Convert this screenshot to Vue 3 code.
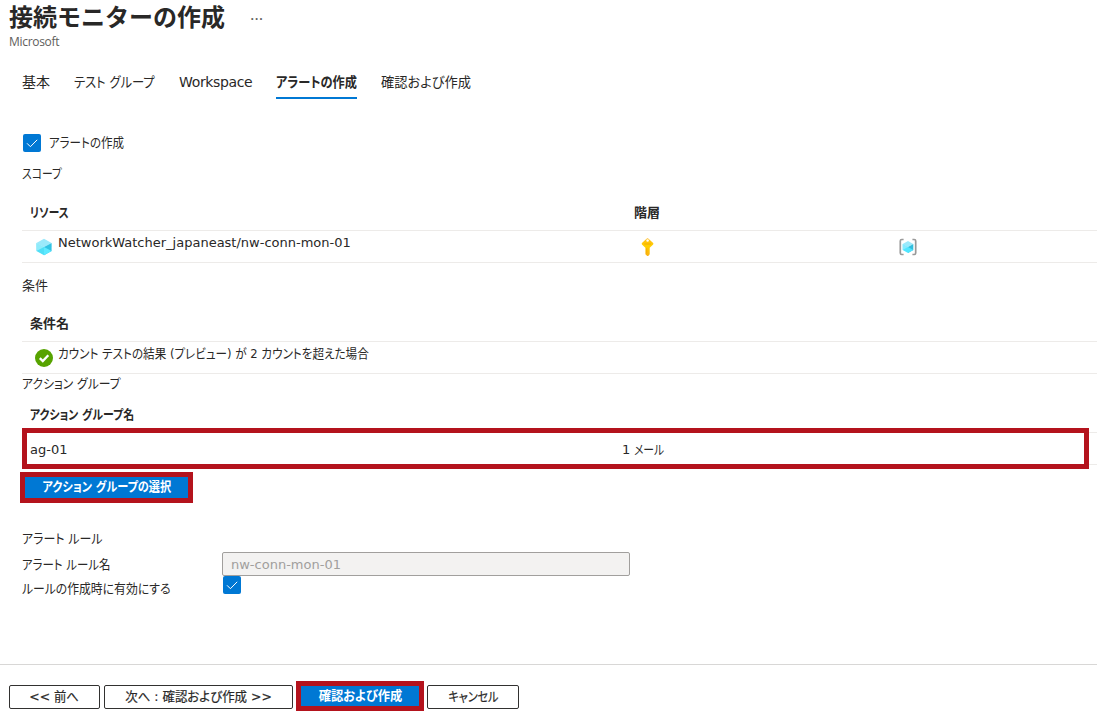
<template>
  <div class="page">
    <header class="header">
      <h1 class="title">接続モニターの作成</h1>
      <button class="more" aria-label="その他">…</button>
    </header>
    <p class="publisher">Microsoft</p>

    <nav class="tabs">
      <button
        v-for="tab in tabs"
        :key="tab.id"
        class="tab"
        :class="[tab.id, { active: tab.id === activeTab }]"
        @click="activeTab = tab.id"
      >
        <span class="text">{{ tab.label }}</span>
      </button>
    </nav>

    <main class="content">
      <label class="create-alert">
        <span class="check" @click="createAlert = !createAlert">
          <svg v-if="createAlert" viewBox="0 0 18 18"><path d="M4 9.3l3.4 3.4L14.2 5.8" /></svg>
        </span>
        <span class="text create-label">アラートの作成</span>
      </label>
      <p class="section scope"><span class="text">スコープ</span></p>

      <div class="table">
        <div class="row head">
          <span class="cell name h-resource"><span class="text">リソース</span></span>
          <span class="cell h-level">階層</span>
        </div>
        <div class="row">
          <div class="cell name with-icon">
            <svg class="cube" viewBox="0 0 18 18">
              <path fill="#9be9fb" d="M9 .7l7.6 4.2L9 9 1.4 4.9z" />
              <path fill="#50dff6" d="M1.4 4.9L9 9v8.3l-7.6-4.2z" />
              <path fill="#32c3e4" d="M16.6 4.9L9 9v8.3l7.6-4.2z" />
              <path fill="#b9f3ff" d="M1.4 4.9L9 9l-7.6 4.1z" opacity=".6" />
              <path fill="#5ee9ff" d="M9 9l7.6 4.1L9 17.3z" />
            </svg>
            <span class="resource">NetworkWatcher_japaneast/nw-conn-mon-01</span>
          </div>
          <div class="cell level">
            <svg class="key" viewBox="0 0 18 18">
              <defs>
                <linearGradient id="gold" x1="0" y1="0" x2="0" y2="1">
                  <stop offset="0" stop-color="#ffb816" />
                  <stop offset=".45" stop-color="#ffd000" />
                  <stop offset="1" stop-color="#fbb114" />
                </linearGradient>
              </defs>
              <path
                fill="url(#gold)"
                fill-rule="evenodd"
                d="M7.6.7a1.4 1.4 0 0 1 1.9 0l4.4 4.1a1.3 1.3 0 0 1 0 1.9l-3.2 3v6.5L9.2 18h-1L6.4 16.2V9.7l-3.2-3a1.3 1.3 0 0 1 0-1.9zM8.6 1.2a1.3 1.3 0 1 0 0 2.6 1.3 1.3 0 0 0 0-2.6z"
              />
              <path fill="#f09a00" d="M5.3 5.6h6.6v.9H5.3zM7.3 10.2h.9v5.2h-.9z" opacity=".6" />
            </svg>
          </div>
          <div class="cell group">
            <svg class="brackets" viewBox="0 0 18 18">
              <path fill="none" stroke="#999" stroke-width="1.7" d="M4.6 1.5H2.8Q1.3 1.5 1.3 3v12q0 1.5 1.5 1.5h1.8M13.4 1.5h1.8q1.5 0 1.5 1.5v12q0 1.5-1.5 1.5h-1.8" />
              <path fill="#9be9fb" d="M9 3l5.3 3L9 9 3.7 6z" />
              <path fill="#50e6ff" d="M3.7 6L9 9v6.1l-5.3-3z" />
              <path fill="#32bedd" d="M14.3 6L9 9v6.1l5.3-3z" />
              <path fill="#9cebff" d="M3.7 6L9 9l-5.3 3.1z" opacity=".7" />
              <path fill="#50e6ff" d="M9 9l5.3 3.1-5.3 3z" />
            </svg>
          </div>
        </div>
      </div>

      <p class="section condition">条件</p>
      <div class="table">
        <div class="row head">
          <span class="cell name">条件名</span>
        </div>
        <div class="row">
          <div class="cell with-icon">
            <svg class="ok" viewBox="0 0 18 18">
              <circle cx="9" cy="9" r="9" fill="#57a300" />
              <path d="M4.8 9.1l3 3 5.5-5.8" fill="none" stroke="#fff" stroke-width="2.3" />
            </svg>
            <span class="text condition-text">カウント テストの結果 (プレビュー) が 2 カウントを超えた場合</span>
          </div>
        </div>
      </div>

      <p class="section action"><span class="text">アクション グループ</span></p>
      <div class="table action-table">
        <div class="row head">
          <span class="cell name h-action"><span class="text">アクション グループ名</span></span>
        </div>
        <div class="row selected">
          <span class="cell name">ag-01</span>
          <span class="cell">1 <span class="text mail">メール</span></span>
          <span class="outline"></span>
        </div>
      </div>
      <button class="primary marked select-group"><span class="text">アクション グループの選択</span></button>

      <section class="rule">
        <p class="rule-line r-title"><span class="text">アラート ルール</span></p>
        <div class="rule-line">
          <label class="rule-label r-name"><span class="text">アラート ルール名</span></label>
          <input class="rule-input" :value="ruleName" disabled />
        </div>
        <div class="rule-line enable">
          <label class="rule-label r-enable"><span class="text">ルールの作成時に有効にする</span></label>
          <span class="check" @click="enableRule = !enableRule">
            <svg v-if="enableRule" viewBox="0 0 18 18"><path d="M4 9.3l3.4 3.4L14.2 5.8" /></svg>
          </span>
        </div>
      </section>
    </main>

    <footer class="footer">
      <button class="btn prev"><span class="text">&lt;&lt; 前へ</span></button>
      <button class="btn next"><span class="text">次へ : 確認および作成 &gt;&gt;</span></button>
      <button class="primary marked review"><span class="text">確認および作成</span></button>
      <button class="btn cancel"><span class="text">キャンセル</span></button>
    </footer>
  </div>
</template>

<script setup>
import { ref } from 'vue'

const tabs = [
  { id: 'basic', label: '基本' },
  { id: 'test-group', label: 'テスト グループ' },
  { id: 'workspace', label: 'Workspace' },
  { id: 'alert', label: 'アラートの作成' },
  { id: 'confirm', label: '確認および作成' },
]

const activeTab = ref('alert')
const createAlert = ref(true)
const enableRule = ref(true)
const ruleName = ref('nw-conn-mon-01')
</script>

<style>
body {
  background: #fff;
  overflow: hidden;
}
</style>

<style scoped>
.page {
  height: 722px;
  display: flex;
  flex-direction: column;
  box-sizing: border-box;
  color: #292827;
  font: 13px/18px 'DejaVu Sans', 'Noto Sans CJK JP', sans-serif;
  font-feature-settings: 'palt';
  white-space: nowrap;
  overflow: hidden;
}

p,
h1 {
  margin: 0;
}

button {
  font: inherit;
  font-feature-settings: inherit;
  color: inherit;
  padding: 0;
  border: 0;
  background: none;
  cursor: pointer;
}

.text {
  display: inline-block;
  transform-origin: 0 50%;
}

button .text {
  transform-origin: 50% 50%;
}

.tab .text {
  transform-origin: 0 50%;
}

.test-group .text { transform: scaleX(0.875); }
.alert .text { transform: scaleX(0.87); }
.confirm .text { transform: scaleX(0.945); }
.create-label { transform: scaleX(0.885); }
.scope .text { transform: scaleX(0.83); }
.h-resource .text { transform: scaleX(0.82); }
.condition-text { transform: scaleX(0.891); }
.action .text { transform: scaleX(0.91); }
.h-action .text { transform: scaleX(0.84); }
.mail { transform: scaleX(0.83); }
.select-group .text { transform: scaleX(0.86); }
.r-title .text { transform: scaleX(0.92); }
.r-name .text { transform: scaleX(0.88); }
.r-enable .text { transform: scaleX(0.91); }
.prev .text { transform: scaleX(0.95); }
.next .text { transform: scaleX(0.957); }
.review .text { transform: scaleX(0.94); }
.cancel .text { transform: scaleX(0.85); }

.header {
  display: flex;
  height: 34px;
  padding-left: 9px;
}

.title {
  width: 241px;
  font-size: 24px;
  font-weight: 700;
  line-height: 36px;
  font-feature-settings: normal;
}

.more {
  height: 34px;
  padding-bottom: 6px;
  box-sizing: border-box;
  font: 17px/22px 'Open Sans', sans-serif;
  color: #605e5c;
}

.publisher {
  padding-left: 9px;
  font: 12px/16px 'Open Sans', sans-serif;
  letter-spacing: -0.3px;
  color: #605e5c;
}

.tabs {
  display: flex;
  gap: 24px;
  height: 50px;
  padding: 17px 0 0 22px;
  box-sizing: border-box;
  font-size: 14px;
}

.tab {
  height: 32px;
  line-height: 30px;
  text-align: left;
  box-sizing: border-box;
  border-bottom: 2px solid transparent;
}

.tab.basic { width: 28px; }
.tab.test-group { width: 81px; }
.tab.workspace { width: 73px; letter-spacing: -0.35px; }
.tab.alert { width: 81px; }

.tab.active {
  font-weight: 700;
  border-bottom-color: #0078d4;
}

.content {
  flex: 1;
  display: flex;
  flex-direction: column;
  padding: 33px 0 0 22px;
}

.create-alert {
  display: flex;
  height: 20px;
  padding-left: 1px;
}

.check {
  display: block;
  flex: none;
  width: 18px;
  height: 18px;
  margin-top: 1px;
  border-radius: 2px;
  background: #0078d4;
}

.check svg {
  display: block;
  width: 18px;
  height: 18px;
  fill: none;
  stroke: #fff;
  stroke-width: 1;
}

.create-label {
  margin-left: 8px;
  line-height: 20px;
}

.section {
  height: 20px;
  line-height: 20px;
}

.scope {
  margin-top: 11px;
}

.row {
  display: flex;
  position: relative;
  height: 32px;
  box-sizing: border-box;
  border-bottom: 1px solid #edebe9;
}

.row.head {
  height: 47px;
  line-height: 22px;
  padding-top: 18px;
  font-weight: 700;
}

.name {
  width: 592px;
}

.cell {
  flex: none;
  padding-left: 8px;
  box-sizing: border-box;
}

.row.head .h-level {
  padding-left: 20px;
}

.with-icon {
  display: flex;
  padding-left: 13px;
  line-height: 24px;
}

.cube,
.ok {
  flex: none;
  width: 18px;
  height: 18px;
  margin: 7px 5px 0 0;
}

.level {
  width: 272px;
  padding-left: 25px;
}

.key,
.brackets {
  width: 18px;
  height: 18px;
  margin-top: 7px;
}

.group {
  padding-left: 13px;
}

.condition {
  margin-top: 12px;
  line-height: 22px;
}

.action-table .head {
  height: 39px;
  padding-top: 10px;
}

.selected {
  line-height: 34px;
}

.outline {
  position: absolute;
  left: 0;
  top: -5px;
  width: 1067px;
  height: 41px;
  box-sizing: border-box;
  border: 5px solid #b4131d;
}

.primary {
  color: #fff;
  font-weight: 700;
  background: #0078d4;
}

.marked {
  box-sizing: border-box;
  border: 5px solid #b4131d;
}

.select-group {
  width: 173px;
  height: 31px;
  margin: 7px 0 0 -2px;
  padding-bottom: 2px;
  line-height: 18px;
}

.rule {
  margin-top: 26px;
}

.rule-line {
  display: flex;
  height: 24px;
  line-height: 20px;
}

.r-title {
  height: 23px;
}

.rule-label {
  width: 200px;
  line-height: 25px;
}

.rule-input {
  width: 408px;
  height: 24px;
  padding: 0 8px;
  box-sizing: border-box;
  border: 1px solid #a19f9d;
  border-radius: 2px;
  background: #f3f2f1;
  color: #a19f9d;
  font: inherit;
}

.enable .check {
  margin: 0 0 0 1px;
}

.footer {
  display: flex;
  flex: none;
  height: 58px;
  padding: 16px 0 0 9px;
  box-sizing: border-box;
  border-top: 1px solid #d8d7d6;
}

.btn {
  height: 24px;
  margin: 4px 4px 0 0;
  box-sizing: border-box;
  border: 1px solid #323130;
  border-radius: 2px;
  line-height: 20px;
  -webkit-text-stroke: 0.2px #292827;
}

.prev { width: 91px; }
.next { width: 189px; margin-right: 3px; }
.cancel { width: 92px; }

.review {
  width: 128px;
  height: 30px;
  margin-right: 3px;
}
</style>
